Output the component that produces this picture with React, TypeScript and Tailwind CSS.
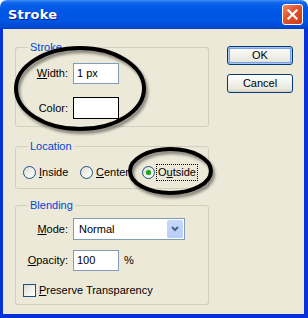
import type { ReactNode } from 'react';

function Radio({ checked }: { checked?: boolean }) {
  return (
    <span className="w-[13px] h-[13px] shrink-0 rounded-full border border-[#1C5180] bg-[linear-gradient(135deg,#DCDBD3_0%,#F2F1EC_55%,#FFFFFF_100%)] flex items-center justify-center">
      {checked && <span className="w-[5px] h-[5px] rounded-full bg-[#21A121] shadow-[0_0_1px_#5CD35C]" />}
    </span>
  );
}

function Group({ title, className, children }: { title: string; className: string; children: ReactNode }) {
  return (
    <fieldset className={`border border-[#D0D0BF] rounded-[3px] ${className}`}>
      <legend className="ml-[12px] px-[2px] leading-[13px] text-[#0046D5]">{title}</legend>
      {children}
    </fieldset>
  );
}

function Field({ label, children }: { label: ReactNode; children: ReactNode }) {
  return (
    <div className="flex items-center gap-[5px]">
      <span className="w-[52px] text-right">{label}</span>
      {children}
    </div>
  );
}

function XpButton({ label, focused }: { label: string; focused?: boolean }) {
  return (
    <button
      className={`w-[66px] h-[19px] rounded-[3px] border border-[#003C74] bg-[linear-gradient(to_bottom,#FFFFFF_0%,#F3F3EF_40%,#E9E8E1_80%,#D6D0C5_100%)] text-[11px] leading-none text-black ${
        focused ? 'shadow-[inset_0_0_0_1px_#A8C4F5,inset_0_0_0_2px_#7AA1E8]' : ''
      }`}
    >
      {label}
    </button>
  );
}

export default function App() {
  return (
    <div className="relative w-[308px] h-[318px] bg-white font-['Liberation_Sans',Arial,sans-serif] text-[11px] text-black">
      {/* Title bar */}
      <div className="h-[29px] rounded-t-[7px] bg-[linear-gradient(to_bottom,#3F8CF3_0%,#0F66EA_10%,#0058E6_30%,#0055E3_70%,#0049D6_92%,#003FC4_100%)] flex items-center justify-between pl-[8px] pr-[5px]">
        <span className="font-['DejaVu_Sans',sans-serif] font-bold text-[13px] text-white [text-shadow:1px_1px_#0A1E8C] tracking-[0.2px]">
          Stroke
        </span>
        <span className="w-[21px] h-[21px] rounded-[3px] border border-white bg-[linear-gradient(135deg,#EC8A6A_0%,#E0532C_45%,#C63C14_100%)] flex items-center justify-center">
          <svg width="11" height="11" viewBox="0 0 11 11">
            <path d="M1.5 1.5 L9.5 9.5 M9.5 1.5 L1.5 9.5" stroke="white" strokeWidth="2.2" strokeLinecap="square" />
          </svg>
        </span>
      </div>

      {/* Body */}
      <div className="flex h-[289px] bg-[#ECE9D8] border-l-[3px] border-r-[4px] border-b-[4px] border-[#0831D9]">
        <div className="ml-[12px] w-[194px] flex flex-col">
          <Group title="Stroke" className="mt-[12px] pt-[9px] pb-[7px]">
            <Field label={<><u>W</u>idth:</>}>
              <span className="w-[46px] h-[21px] border border-[#7F9DB9] bg-white pl-[3px] flex items-center">1 px</span>
            </Field>
            <div className="mt-[13px]">
              <Field label="Color:">
                <span className="w-[46px] h-[22px] border border-black bg-white" />
              </Field>
            </div>
          </Group>

          <Group title="Location" className="mt-[13px] pt-[11px] pb-[7px]">
            <div className="flex items-center h-[17px] pl-[7px]">
              <span className="w-[57px] flex items-center gap-[3px]">
                <Radio />
                <span>
                  <u>I</u>nside
                </span>
              </span>
              <span className="w-[62px] flex items-center gap-[3px]">
                <Radio />
                <span>
                  <u>C</u>enter
                </span>
              </span>
              <span className="flex items-center gap-[1px]">
                <Radio checked />
                <span className="border border-dotted border-black px-[1px] leading-[15px]">
                  O<u>u</u>tside
                </span>
              </span>
            </div>
          </Group>

          <Group title="Blending" className="mt-[10px] pt-[6px] pb-[5px]">
            <Field label={<><u>M</u>ode:</>}>
              <span className="w-[112px] h-[22px] border border-[#7F9DB9] bg-white flex items-center justify-between pl-[5px] pr-px">
                Normal
                <span className="w-[16px] h-[18px] rounded-[2px] bg-[linear-gradient(to_bottom,#C7D8FC_0%,#B8CDF9_100%)] flex items-center justify-center">
                  <svg width="8" height="6" viewBox="0 0 8 6">
                    <path d="M1 1 L4 4 L7 1" stroke="#4D6185" strokeWidth="2" fill="none" />
                  </svg>
                </span>
              </span>
            </Field>
            <div className="mt-[10px] flex items-center">
              <Field label={<><u>O</u>pacity:</>}>
                <span className="w-[46px] h-[21px] border border-[#7F9DB9] bg-white pl-[3px] flex items-center">100</span>
              </Field>
              <span className="ml-[5px]">%</span>
            </div>
            <div className="mt-[11px] flex items-center gap-[3px] pl-[7px]">
              <span className="w-[13px] h-[13px] border border-[#1C5180] bg-[linear-gradient(135deg,#DCDBD3_0%,#F2F1EC_55%,#FFFFFF_100%)]" />
              <span>
                <u>P</u>reserve Transparency
              </span>
            </div>
          </Group>
        </div>

        <div className="ml-[18px] mt-[17px] flex flex-col gap-[9px]">
          <XpButton label="OK" focused />
          <XpButton label="Cancel" />
        </div>
      </div>

      {/* Hand-drawn marker ellipses */}
      <svg className="absolute inset-0 pointer-events-none" width="308" height="318" viewBox="0 0 308 318">
        <defs>
          <filter id="shadow" x="-20%" y="-20%" width="140%" height="140%">
            <feDropShadow dx="2" dy="3" stdDeviation="1.6" floodColor="#000" floodOpacity="0.45" />
          </filter>
        </defs>
        <ellipse cx="80" cy="88.5" rx="64" ry="40.5" fill="none" stroke="#000" strokeWidth="4" filter="url(#shadow)" />
        <ellipse cx="170.5" cy="171" rx="40.5" ry="22" fill="none" stroke="#000" strokeWidth="4" filter="url(#shadow)" />
      </svg>
    </div>
  );
}
